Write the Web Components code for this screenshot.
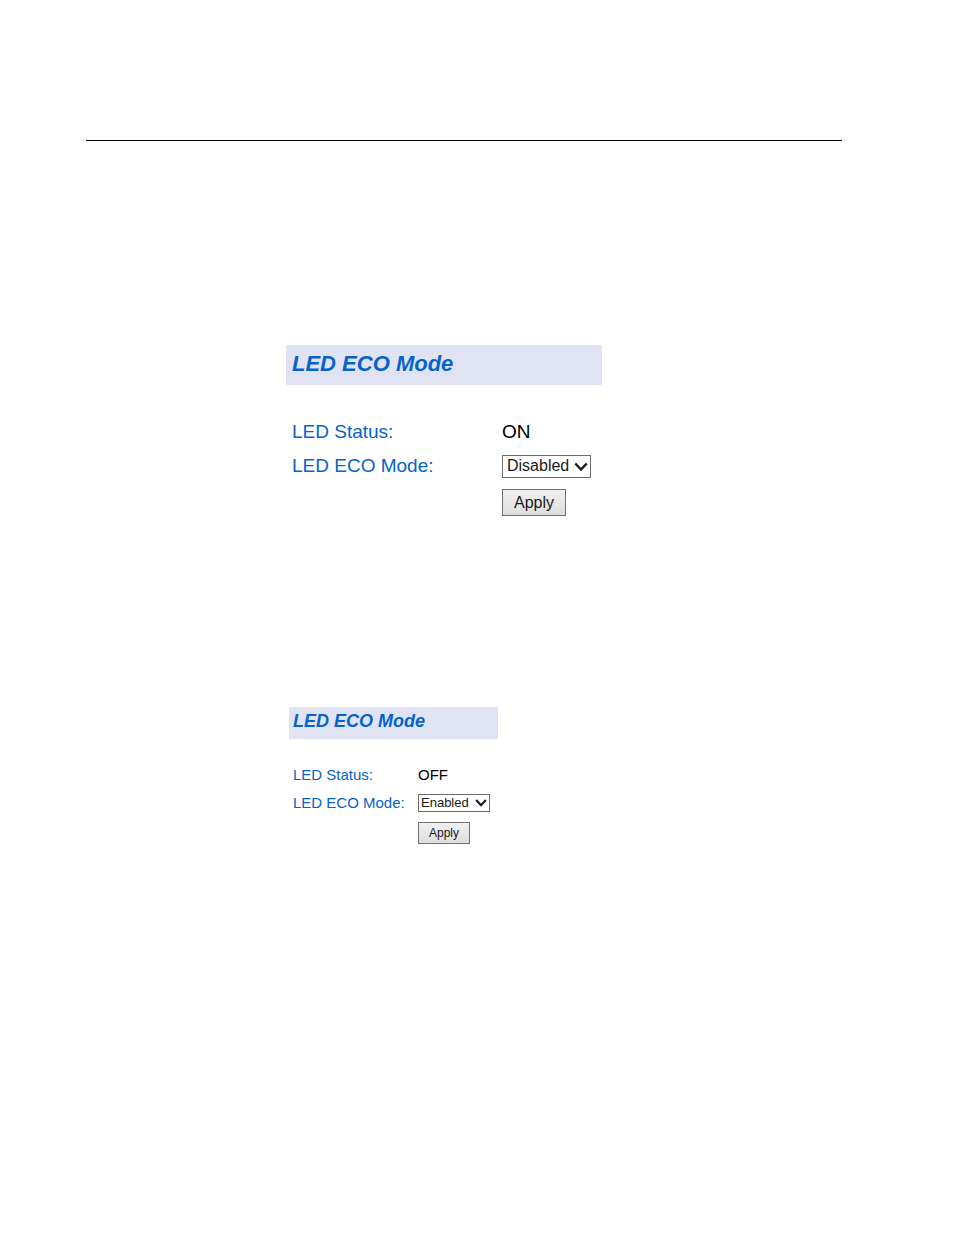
<!DOCTYPE html>
<html lang="en">
<head>
<meta charset="utf-8">
<meta name="viewport" content="width=device-width, initial-scale=1">
<title>LED ECO Mode</title>
<style>
  body {
    margin: 0;
    background: #fff;
    font-family: "Liberation Sans", Arial, sans-serif;
  }
</style>
</head>
<body>
<manual-page>
  <led-panel size="large" status="ON" mode="Disabled"></led-panel>
  <led-panel size="small" status="OFF" mode="Enabled"></led-panel>
</manual-page>

<script>
class ManualPage extends HTMLElement {
    constructor() {
        super();
        this.attachShadow({ mode: "open" });
        this.shadowRoot.innerHTML = `
    <style>
      :host {
        display: block;
        padding: 140px 112px 80px 86px;
      }
      hr {
        margin: 0;
        border: 0;
        border-top: 1px solid #000;
      }
      main {
        display: flex;
        flex-direction: column;
        gap: 191px;
        padding: 204px 0 0 200px;
      }
    </style>
    <hr>
    <main><slot></slot></main>
    `;
    }
}
customElements.define("manual-page", ManualPage);

// Frame and arrow around the select that is passed in
class SelectBox extends HTMLElement {
    constructor() {
        super();
        this.attachShadow({ mode: "open" });
        this.shadowRoot.innerHTML = `
    <style>
      :host {
        display: block;
        position: relative;
        width: var(--select-width);
        height: var(--select-height);
      }
      ::slotted(select) {
        appearance: none;
        box-sizing: border-box;
        display: block;
        width: 100%;
        height: 100%;
        margin: 0;
        padding: 0 0 2px var(--select-pad);
        border: 1px solid #6c6c6c;
        border-radius: 0;
        background: #fff;
        color: #1a1a1a;
        font-family: inherit;
        font-size: var(--select-font);
      }
      svg {
        position: absolute;
        top: 0;
        bottom: 0;
        right: 3px;
        width: var(--arrow-size);
        height: var(--arrow-size);
        margin: auto 0;
        pointer-events: none;
      }
    </style>
    <slot></slot>
    <svg viewBox="0 0 14 14" aria-hidden="true">
      <path d="M1.3 3.5 L7 9.5 L12.7 3.5" fill="none" stroke="#1a1a1a" stroke-width="2.5"/>
    </svg>
    `;
    }
}
customElements.define("select-box", SelectBox);

class LedPanel extends HTMLElement {
    constructor() {
        super();
        this.attachShadow({ mode: "open" });
    }

    connectedCallback() {
        const status = this.getAttribute("status");
        const mode = this.getAttribute("mode");
        const options = ["Disabled", "Enabled"]
            .map((name) => `<option${name === mode ? " selected" : ""}>${name}</option>`)
            .join("");

        this.shadowRoot.innerHTML = `
    <style>
      :host {
        --inset: 6px;
        --label-col: 210px;
        --title-font: 22px;
        --title-line: 38px;
        --title-pad: 2px;
        --text-font: 19px;
        --row: 24px;
        --label-line: 22px;
        --row-gap: 11px;
        --select-width: 89px;
        --select-height: 23px;
        --select-font: 16px;
        --select-pad: 4px;
        --arrow-size: 14px;
        --button-width: 64px;
        --button-height: 27px;
        --button-font: 16px;
        display: block;
        width: 100%;
        max-width: 316px;
      }
      :host([size="small"]) {
        --inset: 4px;
        --label-col: 125px;
        --title-font: 18px;
        --title-line: 28px;
        --title-pad: 4px;
        --text-font: 15px;
        --row: 18px;
        --label-line: 18px;
        --row-gap: 10px;
        --select-width: 72px;
        --select-height: 18px;
        --select-font: 13px;
        --select-pad: 2px;
        --arrow-size: 12px;
        --button-width: 52px;
        --button-height: 22px;
        --button-font: 12px;
        max-width: 209px;
        margin-left: 3px;
      }
      h2 {
        margin: 0;
        padding: 0 var(--inset) var(--title-pad);
        background: #e0e3f4;
        color: #0563cb;
        font-size: var(--title-font);
        font-style: italic;
        line-height: var(--title-line);
      }
      form {
        display: grid;
        grid-template-columns: var(--label-col) 1fr;
        row-gap: var(--row-gap);
        margin: 0;
        padding: 35px 0 0 var(--inset);
        color: #0563cb;
        font-size: var(--text-font);
        line-height: var(--row);
      }
      :host([size="small"]) form {
        padding-top: 27px;
      }
      label {
        height: var(--select-height);
        line-height: var(--label-line);
        white-space: nowrap;
      }
      output {
        color: #000;
      }
      button {
        grid-column: 2;
        box-sizing: border-box;
        width: var(--button-width);
        height: var(--button-height);
        padding: 0;
        border: 1px solid #707070;
        border-radius: 0;
        background: linear-gradient(#f0f0f0, #dedede);
        color: #1a1a1a;
        font-family: inherit;
        font-size: var(--button-font);
      }
    </style>
    <h2>LED ECO Mode</h2>
    <form>
      <span>LED Status:</span>
      <output>${status}</output>
      <label for="mode">LED ECO Mode:</label>
      <select-box><select id="mode">${options}</select></select-box>
      <button type="button">Apply</button>
    </form>
    `;
    }
}
customElements.define("led-panel", LedPanel);
</script>
</body>
</html>
